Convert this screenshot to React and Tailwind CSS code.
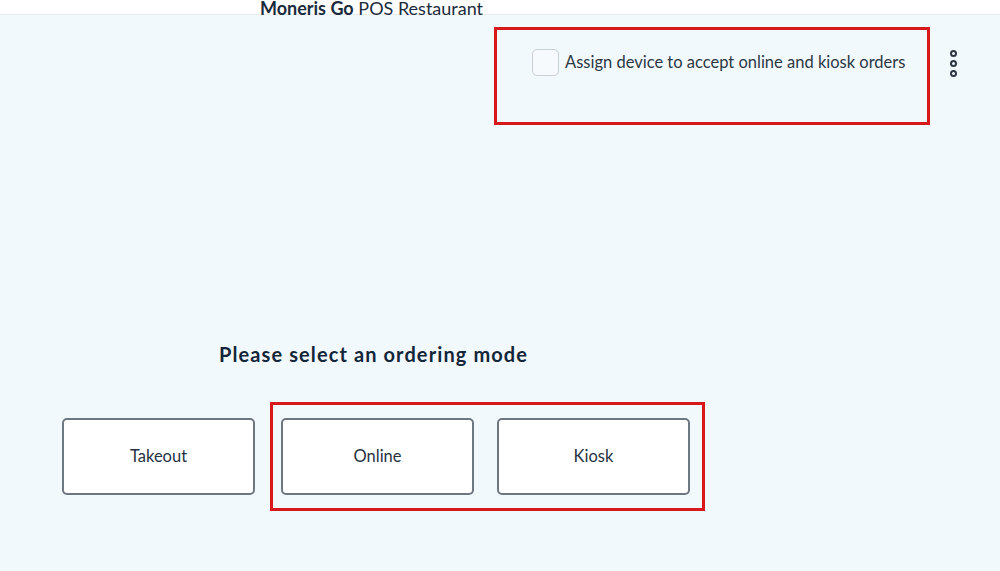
import React from "react";

const ModeButton = ({ label }) => (
  <button className="flex h-[77px] w-[193px] items-center justify-center rounded-[5px] border-2 border-[#6c7780] bg-white text-[16.5px] text-[#25333f]">
    {label}
  </button>
);

const App = () => {
  return (
    <div className="h-[571px] w-[1000px] overflow-hidden bg-[#f2f9fc] font-['Lato',sans-serif] text-[#1a2b3c]">
      {/* header */}
      <div className="h-[15px] border-b border-[#e9edf0] bg-white pl-[260px]">
        <p className="pt-[1px] text-[18px] leading-[14px] text-[#1a2b3c]">
          <strong className="font-bold">Moneris Go</strong> POS Restaurant
        </p>
      </div>

      {/* top right: assign device */}
      <div className="flex justify-end pr-[43px] pt-[12px]">
        <div className="flex h-[98px] w-[436px] items-start border-[3px] border-[#d7191c] pl-[35px] pt-[19px]">
          <span className="h-[27px] w-[27px] rounded-[5px] border border-[#c9cfd4] bg-[#f7fafc]" />
          <span className="ml-[6px] mt-[1px] text-[16.5px] text-[#2b3844]">
            Assign device to accept online and kiosk orders
          </span>
        </div>
        <div className="ml-[20px] mt-[23px] flex flex-col gap-[3px]">
          <span className="h-[7px] w-[7px] rounded-full border-2 border-[#2c3742]" />
          <span className="h-[7px] w-[7px] rounded-full border-2 border-[#2c3742]" />
          <span className="h-[7px] w-[7px] rounded-full border-2 border-[#2c3742]" />
        </div>
      </div>

      {/* ordering mode */}
      <h2 className="mt-[217px] pl-[219px] text-[20px] font-bold leading-[24px] tracking-[1.1px] text-[#13263a]">
        Please select an ordering mode
      </h2>

      <div className="mt-[36px] flex items-center pl-[62px]">
        <ModeButton label="Takeout" />
        <div className="ml-[15px] flex h-[109px] w-[435px] items-center gap-[23px] border-[3px] border-[#d7191c] pl-[8px]">
          <ModeButton label="Online" />
          <ModeButton label="Kiosk" />
        </div>
      </div>
    </div>
  );
};

export default App;
